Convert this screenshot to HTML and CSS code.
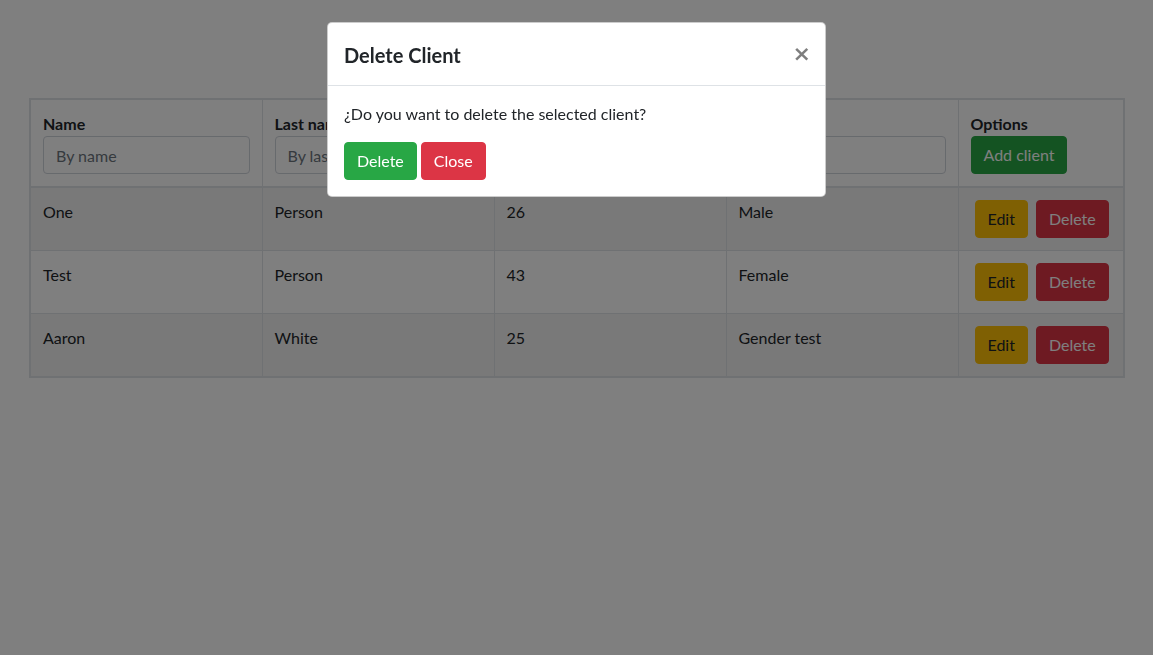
FILE: index.html
```html
<!DOCTYPE html>
<html lang="en">
<head>
<meta charset="utf-8">
<title>Clients</title>
<link rel="stylesheet" href="styles.css">
</head>
<body>
<div class="page">
  <table class="clients">
    <thead>
      <tr>
        <th><div class="th-label">Name</div><input class="field" placeholder="By name"></th>
        <th><div class="th-label">Last name</div><input class="field" placeholder="By last name"></th>
        <th><div class="th-label">Age</div><input class="field" placeholder="By age"></th>
        <th><div class="th-label">Gender</div><input class="field" placeholder="By gender"></th>
        <th class="opts"><div class="th-label">Options</div><button class="btn btn-success">Add client</button></th>
      </tr>
    </thead>
    <tbody>
      <tr class="odd">
        <td>One</td><td>Person</td><td>26</td><td>Male</td>
        <td class="opts"><div class="row-actions"><button class="btn btn-warning">Edit</button><button class="btn btn-danger">Delete</button></div></td>
      </tr>
      <tr>
        <td>Test</td><td>Person</td><td>43</td><td>Female</td>
        <td class="opts"><div class="row-actions"><button class="btn btn-warning">Edit</button><button class="btn btn-danger">Delete</button></div></td>
      </tr>
      <tr class="odd">
        <td>Aaron</td><td>White</td><td>25</td><td>Gender test</td>
        <td class="opts"><div class="row-actions"><button class="btn btn-warning">Edit</button><button class="btn btn-danger">Delete</button></div></td>
      </tr>
    </tbody>
  </table>
</div>

<div class="backdrop"></div>

<div class="modal">
  <div class="modal-content">
    <div class="modal-header">
      <h5 class="modal-title">Delete Client</h5>
      <button class="close" aria-label="Close">&times;</button>
    </div>
    <div class="modal-body">
      <p class="question">¿Do you want to delete the selected client?</p>
      <div class="actions">
        <button class="btn btn-success">Delete</button>
        <button class="btn btn-danger">Close</button>
      </div>
    </div>
  </div>
</div>
</body>
</html>
```

FILE: styles.css
```css
* { box-sizing: border-box; }
html, body { margin: 0; padding: 0; }
body {
  font-family: Lato, "Noto Sans", sans-serif;
  font-size: 16px;
  line-height: 1.5;
  color: #212529;
  background: #fff;
  width: 1153px;
  height: 655px;
  overflow: hidden;
}
.page { padding: 98px 0 0 29px; }
.clients {
  width: 1096px;
  border-collapse: collapse;
  border: 2px solid #dee2e6;
  table-layout: fixed;
}
.clients th, .clients td {
  border: 1px solid #dee2e6;
  padding: 12px;
  vertical-align: top;
  text-align: left;
}
.clients th { font-weight: 700; vertical-align: bottom; border-bottom-width: 2px; }
.clients th:nth-child(-n+4), .clients td:nth-child(-n+4) { width: 232px; }
.clients tr.odd td { background: rgba(0,0,0,.05); }
.row-actions { display: flex; gap: 8px; padding: 0 4px; }
.th-label { line-height: 24px; }
.field {
  display: block;
  width: 100%;
  height: 38px;
  padding: 6px 12px;
  font: inherit;
  font-weight: 400;
  color: #495057;
  border: 1px solid #ced4da;
  border-radius: 4px;
  background: #fff;
}
.field::placeholder { color: #6c757d; }
.btn {
  display: inline-block;
  font: inherit;
  font-weight: 400;
  line-height: 24px;
  padding: 6px 12px;
  border: 1px solid transparent;
  border-radius: 4px;
  cursor: pointer;
  white-space: nowrap;
}
.btn-success { background: #28a745; border-color: #28a745; color: #fff; }
.btn-danger { background: #dc3545; border-color: #dc3545; color: #fff; }
.btn-warning { background: #ffc107; border-color: #ffc107; color: #212529; }
.backdrop {
  position: fixed;
  inset: 0;
  background: rgba(0,0,0,.5);
}
.modal {
  position: fixed;
  inset: 0;
  padding-top: 22px;
}
.modal-content {
  width: 499px;
  margin: 0 auto;
  background: #fff;
  border: 1px solid rgba(0,0,0,.2);
  border-radius: 5px;
}
.modal-header {
  display: flex;
  align-items: flex-start;
  justify-content: space-between;
  padding: 16px;
  border-bottom: 1px solid #dee2e6;
}
.modal-title { margin: 0; font-size: 20px; font-weight: 700; line-height: 30px; padding-top: 1px; height: 30px; }
.close {
  padding: 20px 14px 12px 16px;
  margin: -16px -16px -16px auto;
  background: transparent;
  border: 0;
  font-family: "DejaVu Sans", sans-serif;
  font-size: 22px;
  font-weight: 700;
  line-height: 1;
  color: #000;
  opacity: .5;
  text-shadow: 0 1px 0 #fff;
}
.modal-body { padding: 16px; }
.question { margin: 0 0 16px; }
.actions { display: flex; gap: 4px; }
```
